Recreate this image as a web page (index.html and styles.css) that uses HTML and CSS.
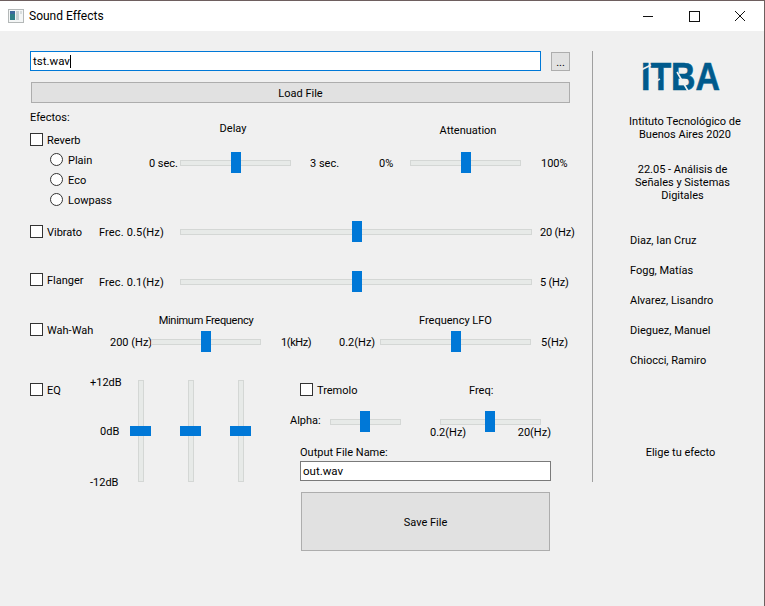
FILE: index.html
```html
<!DOCTYPE html>
<html>
  <head>
    <title>Sound Effects</title>
    <link rel="stylesheet" href="styles.css">
  </head>
  <body>
    <div class="window">
      <div class="titlebar">
        <svg class="app-icon" width="16" height="16" viewBox="0 0 16 16">
          <rect x="0.5" y="1.5" width="15" height="13" fill="#f4f6f6" stroke="#b4b8b8"/>
          <rect x="2" y="3" width="5" height="9" fill="#2f7f86"/>
          <rect x="2" y="3" width="5" height="3" fill="#3c6a9c"/>
          <rect x="8" y="3" width="3" height="9" fill="#c9d3d3"/>
          <rect x="12" y="3" width="2" height="3" fill="#d8dddd"/>
        </svg>
        <span class="title">Sound Effects</span>
        <div class="win-btns">
          <svg width="46" height="30" viewBox="0 0 46 30"><path d="M18 15.5h10" stroke="#111"/></svg>
          <svg width="46" height="30" viewBox="0 0 46 30"><rect x="18.5" y="10.5" width="10" height="10" fill="none" stroke="#111"/></svg>
          <svg width="46" height="30" viewBox="0 0 46 30"><path d="M18 10l10 10M28 10l-10 10" stroke="#111"/></svg>
        </div>
      </div>

      <div class="content">
        <div class="left">
          <div class="file-row">
            <div class="input focused">tst.wav<span class="caret"></span></div>
            <div class="btn dots">...</div>
          </div>
          <div class="btn load">Load File</div>

          <div class="reverb">
            <div class="reverb-opts">
              <div class="efectos">Efectos:</div>
              <label class="check"><i class="box"></i>Reverb</label>
              <label class="radio"><i class="dot"></i>Plain</label>
              <label class="radio"><i class="dot"></i>Eco</label>
              <label class="radio"><i class="dot"></i>Lowpass</label>
            </div>
            <div class="group delay">
              <div class="head">Delay</div>
              <span class="lo">0 sec.</span>
              <div class="slider"><i></i></div>
              <span class="hi">3 sec.</span>
            </div>
            <div class="group atten">
              <div class="head">Attenuation</div>
              <span class="lo">0%</span>
              <div class="slider"><i></i></div>
              <span class="hi">100%</span>
            </div>
          </div>

          <div class="long-row vibrato">
            <label class="check"><i class="box"></i>Vibrato</label>
            <span>Frec. 0.5(Hz)</span>
            <div class="slider"><i></i></div>
            <span>20 (Hz)</span>
          </div>
          <div class="long-row flanger">
            <label class="check"><i class="box"></i>Flanger</label>
            <span>Frec. 0.1(Hz)</span>
            <div class="slider"><i></i></div>
            <span>5 (Hz)</span>
          </div>

          <div class="wah">
            <label class="check"><i class="box"></i>Wah-Wah</label>
            <div class="group minfreq">
              <div class="head">Minimum Frequency</div>
              <span class="lo">200 (Hz)</span>
              <div class="slider"><i></i></div>
              <span class="hi">1(kHz)</span>
            </div>
            <div class="group lfo">
              <div class="head">Frequency LFO</div>
              <span class="lo">0.2(Hz)</span>
              <div class="slider"><i></i></div>
              <span class="hi">5(Hz)</span>
            </div>
          </div>

          <div class="bottom">
            <label class="check eq-check"><i class="box"></i>EQ</label>
            <div class="eq-scale">
              <span>+12dB</span>
              <span class="mid">0dB</span>
              <span>-12dB</span>
            </div>
            <div class="eq-bands">
              <div class="vslider"><i></i></div>
              <div class="vslider"><i></i></div>
              <div class="vslider"><i></i></div>
            </div>
            <div class="bottom-right">
              <div class="trem-row">
                <label class="check"><i class="box"></i>Tremolo</label>
                <span class="freq-label">Freq:</span>
              </div>
              <div class="trem-sliders">
                <span class="alpha">Alpha:</span>
                <div class="slider alpha-sl"><i></i></div>
                <div class="freq-col">
                  <div class="slider freq-sl"><i></i></div>
                  <div class="freq-range"><span>0.2(Hz)</span><span>20(Hz)</span></div>
                </div>
              </div>
              <div class="out-label">Output File Name:</div>
              <div class="input out">out.wav</div>
              <div class="btn save">Save File</div>
            </div>
          </div>
        </div>

        <div class="side">
          <svg class="logo" width="100" height="44" viewBox="0 0 100 44">
            <text class="logo-text" x="0" y="36" textLength="79" lengthAdjust="spacingAndGlyphs">ITBA</text>
            <path d="M0 16L10 11M11 29l8-4M36 18l11 19" stroke="#f0f0f0" stroke-width="1.6"/>
          </svg>
          <p class="inst">Intituto Tecnológico de<br>Buenos Aires 2020</p>
          <p class="course">22.05 - Análisis de<br>Señales y Sistemas<br>Digitales</p>
          <ul class="names">
            <li>Diaz, Ian Cruz</li>
            <li>Fogg, Matías</li>
            <li>Alvarez, Lisandro</li>
            <li>Dieguez, Manuel</li>
            <li>Chiocci, Ramiro</li>
          </ul>
          <div class="status">Elige tu efecto</div>
        </div>
      </div>
    </div>
  </body>
</html>
```

FILE: styles.css
```css
* {
  box-sizing: border-box;
}

html, body {
  margin: 0;
  height: 100%;
}

body {
  font-family: Roboto, "Noto Sans", sans-serif;
  font-size: 11px;
  color: #000;
  background: #f0f0f0;
}

.window {
  width: 765px;
  height: 606px;
  background: #f0f0f0;
  border-top: 1px solid #6e5f5f;
  border-right: 1px solid #6e5f5f;
  overflow: hidden;
}

/* title bar */
.titlebar {
  display: flex;
  align-items: center;
  height: 30px;
  padding-left: 8px;
  background: #fff;
}
.app-icon {
  margin-right: 5px;
}
.title {
  font-size: 12px;
}
.win-btns {
  display: flex;
  margin-left: auto;
  margin-right: 1px;
}

.content {
  display: flex;
  padding: 20px 0 0 30px;
}

.left {
  width: 540px;
}

/* common controls */
.input {
  display: flex;
  align-items: center;
  height: 20px;
  padding-left: 2px;
  background: #fff;
  border: 1px solid #7a7a7a;
  font-size: 11.5px;
}
.input.focused {
  border-color: #0078d7;
}
.caret {
  width: 1px;
  height: 13px;
  background: #000;
}
.btn {
  display: flex;
  align-items: center;
  justify-content: center;
  padding-top: 2px;
  background: #e1e1e1;
  border: 1px solid #adadad;
}

.file-row {
  display: flex;
  align-items: flex-start;
}
.file-row .input {
  width: 511px;
}
.dots {
  width: 19px;
  height: 19px;
  margin: 1px 0 0 10px;
}
.load {
  width: 539px;
  height: 21px;
  margin: 11px 0 0 1px;
}

/* the padding drops the label 1px, the margin keeps the box where it was */
.check, .radio {
  display: flex;
  align-items: center;
  height: 21px;
  padding-top: 2px;
  white-space: nowrap;
}
.box {
  width: 13px;
  height: 13px;
  margin: 0 4px 2px 0;
  background: #fff;
  border: 1px solid #333;
}
.dot {
  width: 13px;
  height: 13px;
  margin: 0 5px 2px 0;
  background: #fff;
  border: 1px solid #333;
  border-radius: 50%;
}

/* horizontal slider, the handle is always centered */
.slider {
  position: relative;
  display: flex;
  justify-content: center;
  height: 21px;
}
.slider::before {
  content: "";
  position: absolute;
  left: 0;
  right: 0;
  top: 8px;
  height: 4px;
  background: #e7eae8;
  border: 1px solid #d4d7d5;
}
.slider i {
  position: relative;
  width: 10px;
  height: 21px;
  background: #0078d7;
}

.group {
  display: grid;
  align-items: center;
}
.group .head {
  grid-column: 2;
  padding-top: 2px;
  text-align: center;
  white-space: nowrap;
}
.group .lo {
  grid-column: 1;
  grid-row: 2;
  padding-top: 2px;
  text-align: right;
  white-space: nowrap;
}
.group .slider {
  grid-column: 2;
  grid-row: 2;
}
.group .hi {
  grid-column: 3;
  grid-row: 2;
  padding-top: 2px;
  white-space: nowrap;
}

/* reverb */
.reverb {
  display: flex;
  margin-top: 6px;
  height: 101px;
}
.reverb-opts {
  width: 118px;
  flex: none;
}
.efectos {
  height: 16px;
  line-height: 16px;
  padding-top: 1px;
}
.reverb-opts .check {
  margin: 4px 0 -1px;
}
.reverb-opts .radio {
  margin: 0 0 -1px 20px;
}
.delay {
  grid-template-columns: 30px 111px 47px;
  column-gap: 2px;
  grid-template-rows: 16px 21px;
  row-gap: 17px;
  margin-top: 10px;
  align-self: flex-start;
}
.delay .head {
  padding-right: 5px;
}
.delay .hi {
  padding-left: 17px;
}
.atten {
  grid-template-columns: 24px 111px 48px;
  column-gap: 7px;
  grid-template-rows: 16px 21px;
  row-gap: 15px;
  margin: 12px 0 0 39px;
  align-self: flex-start;
}
.atten .lo {
  text-align: left;
}
.atten .head {
  padding-left: 5px;
}
.atten .hi {
  padding-left: 13px;
}

/* vibrato, flanger */
.long-row {
  display: grid;
  grid-template-columns: 69px 81px 352px auto;
  align-items: center;
  height: 21px;
  white-space: nowrap;
}
.long-row > span {
  padding-top: 2px;
  letter-spacing: 0.15px;
}
.long-row > span:last-child {
  padding-left: 8px;
  letter-spacing: -0.2px;
}
.long-row .slider i {
  margin-left: 2px;
}
.vibrato {
  margin-top: 11px;
}
.flanger {
  margin-top: 29px;
}
.flanger .check {
  margin-top: -4px;
}

/* wah-wah */
.wah {
  display: flex;
  margin-top: 19px;
  height: 41px;
}
.wah .check {
  align-self: flex-start;
  flex: none;
  width: 80px;
  margin-top: 8px;
}
.minfreq {
  grid-template-columns: 40px 110px 59px;
  column-gap: 1px;
  grid-template-rows: 16px 21px;
  row-gap: 4px;
}
.minfreq .head {
  letter-spacing: -0.3px;
}
.minfreq .hi {
  padding-left: 19px;
  letter-spacing: -0.4px;
}
.lfo {
  grid-template-columns: 36px 151px auto;
  column-gap: 5px;
  grid-template-rows: 16px 21px;
  row-gap: 4px;
  margin-left: 18px;
}
.lfo .hi {
  padding-left: 5px;
}

/* eq + tremolo + output */
.bottom {
  display: flex;
  margin-top: 20px;
}
.eq-check {
  align-self: flex-start;
  flex: none;
  width: 60px;
  margin-top: 7px;
}
.eq-scale {
  display: flex;
  flex-direction: column;
  justify-content: space-between;
  flex: none;
  width: 40px;
  height: 117px;
  padding-top: 4px;
}
.eq-scale .mid {
  padding-left: 10px;
  margin-bottom: 2px;
}
.eq-bands {
  display: flex;
  gap: 29px;
  height: 102px;
  margin-top: 8px;
}
.vslider {
  position: relative;
  display: flex;
  align-items: center;
  width: 21px;
  height: 102px;
}
.vslider::before {
  content: "";
  position: absolute;
  top: 0;
  bottom: 0;
  left: 8px;
  width: 4px;
  background: #e7eae8;
  border: 1px solid #d4d7d5;
}
.vslider i {
  position: relative;
  width: 21px;
  height: 10px;
  background: #0078d7;
}

.bottom-right {
  margin-left: 49px;
  width: 251px;
}
.trem-row {
  display: flex;
  align-items: center;
  height: 21px;
  margin-top: 7px;
}
.trem-row .check {
  width: 169px;
}
.freq-label {
  padding-top: 2px;
}
.trem-sliders {
  display: flex;
  margin: 11px 0 0 -10px;
  height: 29px;
}
.alpha {
  width: 40px;
  line-height: 20px;
}
.alpha-sl {
  width: 71px;
}
.alpha-sl i, .freq-sl i {
  margin-right: 1px;
}
.freq-col {
  margin-left: 29px;
  width: 121px;
}
.freq-sl {
  width: 101px;
  margin-left: 10px;
}
.freq-range {
  display: flex;
  justify-content: space-between;
  margin-top: -7px;
  line-height: 16px;
  position: relative;
}
.out-label {
  height: 16px;
  line-height: 16px;
  margin-top: 5px;
}
.out {
  width: 251px;
  height: 20px;
}
.save {
  width: 249px;
  height: 59px;
  margin: 11px 0 0 1px;
}

/* right panel */
.side {
  width: 172px;
  height: 431px;
  margin-left: 22px;
  border-left: 1px solid #a0a0a0;
  padding-top: 3px;
  text-align: center;
}
.logo {
  display: block;
  margin-left: 48px;
}
.logo-text {
  font-family: "Liberation Sans", sans-serif;
  font-size: 39px;
  font-weight: bold;
  fill: #005a8c;
  stroke: #005a8c;
  stroke-width: 0.6;
}
.side p {
  margin: 0;
  line-height: 13px;
}
.inst {
  margin-top: 17px !important;
  padding-left: 15px;
  padding-right: 2px;
}
.course {
  margin-top: 22px !important;
  padding-left: 10px;
  padding-right: 2px;
}
.names {
  list-style: none;
  margin: 24px 0 0 37px;
  padding: 0;
  text-align: left;
}
.names li {
  height: 30px;
  line-height: 30px;
}
.status {
  margin-top: 70px;
  padding-left: 4px;
}
```
